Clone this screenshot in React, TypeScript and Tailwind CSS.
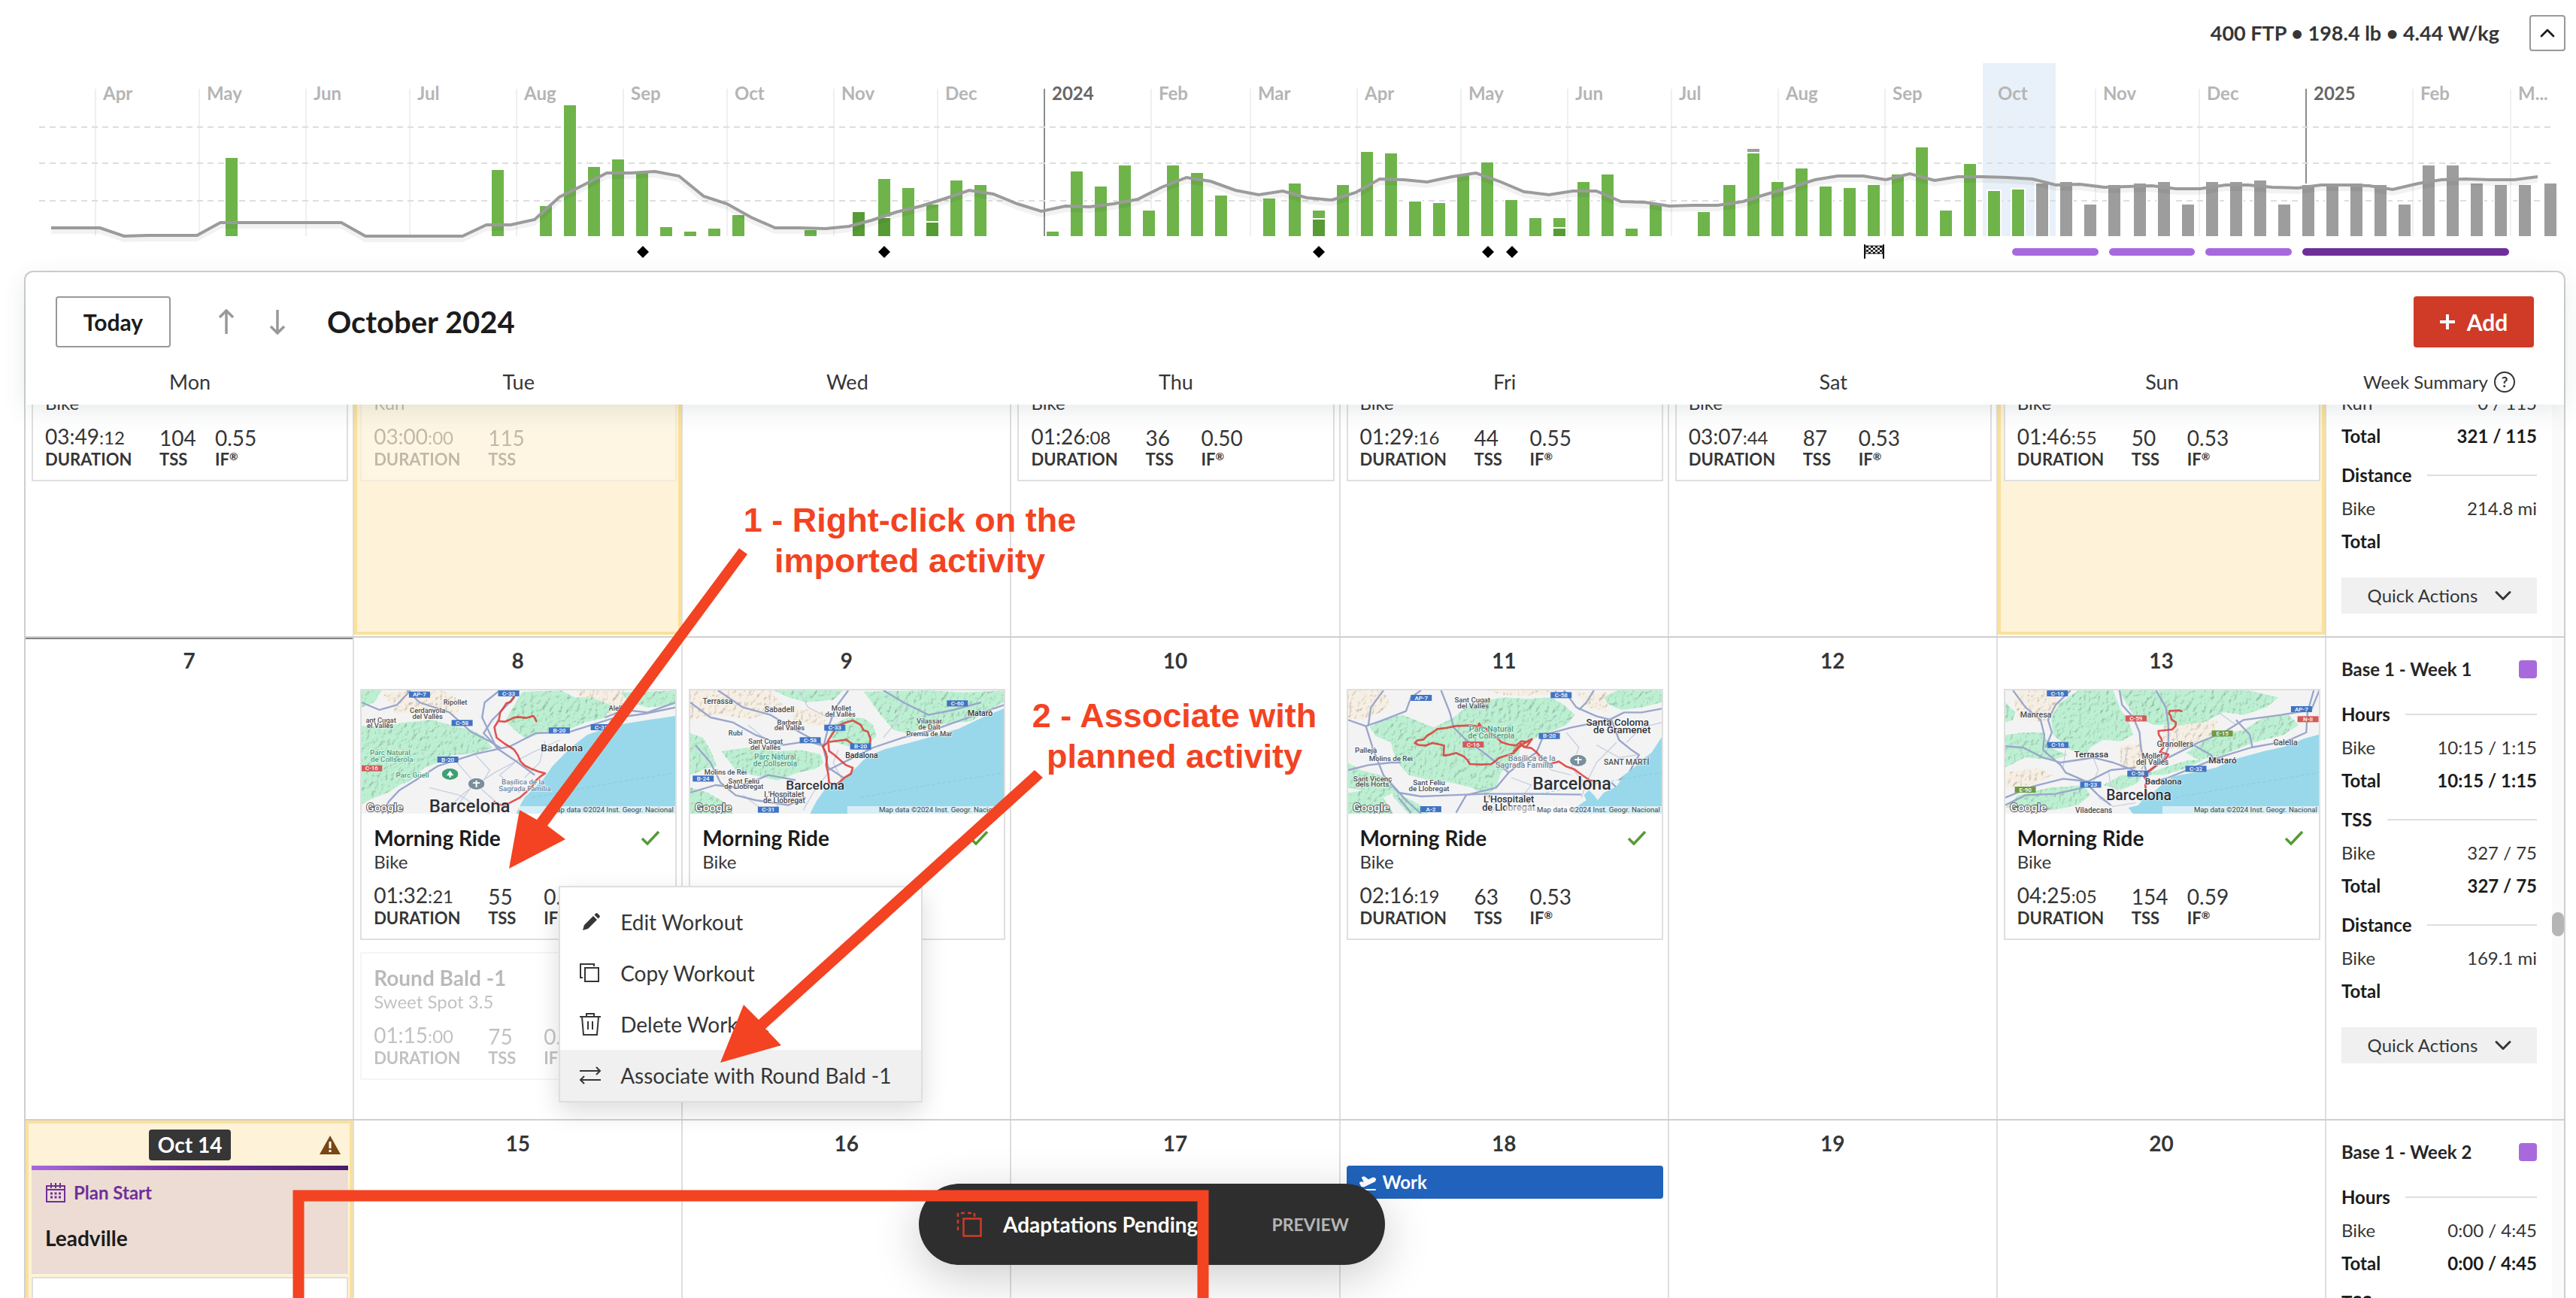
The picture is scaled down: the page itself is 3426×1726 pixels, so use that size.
import type { ReactNode } from "react";
import { ChevronDown, ChevronUp, PlaneTakeoff } from "lucide-react";

type Point = [number, number];

/* ---------- season chart ---------- */

const CHART_BASE = 314;

const months: { label: string; x: number; year?: boolean }[] = [
  { label: "Apr", x: 127 },
  { label: "May", x: 265 },
  { label: "Jun", x: 407 },
  { label: "Jul", x: 545 },
  { label: "Aug", x: 687 },
  { label: "Sep", x: 829 },
  { label: "Oct", x: 967 },
  { label: "Nov", x: 1109 },
  { label: "Dec", x: 1247 },
  { label: "2024", x: 1389, year: true },
  { label: "Feb", x: 1531 },
  { label: "Mar", x: 1663 },
  { label: "Apr", x: 1805 },
  { label: "May", x: 1943 },
  { label: "Jun", x: 2085 },
  { label: "Jul", x: 2223 },
  { label: "Aug", x: 2365 },
  { label: "Sep", x: 2507 },
  { label: "Oct", x: 2647 },
  { label: "Nov", x: 2787 },
  { label: "Dec", x: 2925 },
  { label: "2025", x: 3067, year: true },
  { label: "Feb", x: 3209 },
  { label: "M...", x: 3339 },
];

// [left, top]
const completed: Point[] = [
  [300, 210], [654, 226], [718, 274], [750, 140], [782, 222], [814, 212],
  [846, 230], [878, 302], [910, 308], [942, 304], [974, 286], [1070, 306],
  [1168, 238], [1200, 250], [1232, 272], [1264, 240], [1296, 246],
  [1392, 308], [1424, 228], [1456, 248], [1488, 220], [1520, 280],
  [1552, 220], [1584, 230], [1616, 260], [1680, 264], [1714, 244],
  [1746, 280], [1778, 246], [1810, 202], [1842, 204], [1874, 268],
  [1906, 270], [1938, 232], [1970, 216], [2002, 266], [2034, 290],
  [2066, 290], [2098, 242], [2130, 232], [2162, 304], [2194, 272],
  [2258, 282], [2292, 246], [2324, 204], [2356, 242], [2388, 224],
  [2420, 248], [2452, 250], [2484, 246], [2516, 232], [2548, 196],
  [2580, 280], [2612, 218], [2644, 254], [2676, 252],
];

const outdoor: Point[] = [
  [1134, 282], [1168, 290], [1232, 296], [1746, 292], [2066, 304],
];

const planned: Point[] = [
  [2708, 244], [2740, 242], [2772, 272], [2804, 246], [2838, 244],
  [2870, 242], [2902, 272], [2934, 242], [2966, 242], [2998, 240],
  [3030, 272], [3062, 246], [3094, 246], [3126, 244], [3158, 246],
  [3190, 272], [3222, 220], [3254, 220], [3286, 244], [3318, 246],
  [3350, 246], [3384, 244],
];

const trend =
  "68,303 133,303 165,314 197,313 262,313 293,296 357,296 393,296 454,296 486,314 615,314 647,299 679,299 711,292 744,262 776,246 807,230 839,230 871,228 903,234 936,261 967,271 999,289 1031,303 1063,303 1098,304 1129,301 1159,293 1192,282 1225,274 1257,264 1289,253 1321,258 1353,271 1385,281 1417,274 1449,275 1481,271 1513,265 1545,249 1578,236 1610,241 1643,253 1674,259 1706,254 1738,263 1771,266 1803,256 1835,238 1867,239 1898,242 1931,235 1963,230 1994,241 2027,255 2060,259 2092,254 2123,254 2156,268 2188,269 2220,274 2252,273 2284,273 2318,268 2350,258 2382,249 2414,239 2444,234 2478,234 2508,239 2540,231 2573,240 2604,235 2637,235 2670,236 2703,238 2734,246 2766,245 2799,249 2830,248 2862,247 2894,251 2926,251 2960,246 2990,246 3022,249 3056,250 3087,246 3122,246 3151,247 3182,252 3216,244 3247,239 3279,238 3311,239 3344,239 3375,235";

const phases = [
  { x: 2676, width: 115, color: "#a869dd" },
  { x: 2805, width: 114, color: "#a869dd" },
  { x: 2933, width: 115, color: "#a869dd" },
  { x: 3062, width: 275, color: "#6f2f9a" },
];

const Bars = ({ data, color }: { data: Point[]; color: string }) => (
  <>
    {data.map(([x, y]) => (
      <g key={x}>
        <rect x={x - 2} y={y - 2} width={20} height={CHART_BASE - y + 2} fill="#fff" />
        <rect x={x} y={y} width={16} height={CHART_BASE - y} fill={color} />
      </g>
    ))}
  </>
);

const SeasonChart = () => (
  <svg viewBox="0 68 3426 292" className="block w-full shrink-0" role="img" aria-label="Season training load">
    <rect x={2637} y={84} width={97} height={230} fill="#e8f1f9" />
    {months.map(({ label, x, year }) => (
      <g key={x}>
        <line x1={x} x2={x} y1={118} y2={CHART_BASE} stroke={year ? "#8c8c8c" : "#efefef"} strokeWidth={2} />
        <text x={x + 10} y={133} fontSize={24} fontWeight={700} fill={year ? "#666" : "#b5b5b5"}>
          {label}
        </text>
      </g>
    ))}
    {[169, 217, 267].map((y) => (
      <line key={y} x1={52} x2={3392} y1={y} y2={y} stroke="#dedede" strokeWidth={2} strokeDasharray="8 6" />
    ))}
    <Bars data={completed} color="#6eb44b" />
    <Bars data={outdoor} color="#579b35" />
    <Bars data={planned} color="#9d9d9d" />
    <rect x={2324} y={198} width={16} height={4} fill="#9d9d9d" />
    <polyline points={trend} fill="none" stroke="#000" strokeOpacity={0.05} strokeWidth={6} transform="translate(0 5)" />
    <polyline points={trend} fill="none" stroke="#9b9b9b" strokeWidth={4} />
    {[855, 1176, 1754, 1979, 2011].map((x) => (
      <path key={x} d={`M${x} 327l8 8-8 8-8-8z`} />
    ))}
    {/* checkered race flag */}
    <g fill="#111">
      <path d="M2479 325h2v19h-2zM2504 325h2v19h-2z" />
      <path d="M2481 327h23v10h-23z" fill="none" stroke="#111" />
      {[0, 1, 2, 3].map((r) =>
        [0, 1, 2, 3].map((c) => (
          <rect key={`${r}-${c}`} x={2482 + c * 6 + (r % 2) * 3} y={327 + r * 2.6} width={3} height={2.6} />
        ))
      )}
    </g>
    {phases.map(({ x, width, color }) => (
      <rect key={x} x={x} y={330} width={width} height={10} rx={5} fill={color} />
    ))}
  </svg>
);

/* ---------- route maps ---------- */

type LabelKind = "town" | "city" | "park" | "poi" | "blue" | "red" | "green";
type MapLabel = [string, number, number, LabelKind, number?];

interface MapData {
  id: string;
  sea: string;
  forests: string[];
  bare: string[];
  roads: string[];
  streets: string[];
  routes: string[];
  labels: MapLabel[];
  pins?: { x: number; y: number; kind: "tree" | "church" }[];
}

const badgeColor = { blue: "#3f74c4", red: "#d45a5a", green: "#6d9b3f" };
const textColor = { town: "#4a4d52", city: "#2f3136", park: "#4a9b78", poi: "#71879b" };

const badalona: MapData = {
  id: "badalona",
  sea: "M1262 114L1100 138 1013 153 910 189 841 242 772 313 729 373 660 438 634 485 625 506H1262z",
  forests: [
    "M9 153L90 160 169 141 290 129 376 153 450 170 496 195 531 242 470 262 427 266 370 270 315 301 260 320 204 373 160 390 117 420 60 440 9 467z",
    "M651 17L806 12 860 40 930 40 1013 76 978 123 900 140 806 183 740 175 668 206 630 180 582 135 600 100z",
    "M1040 20L1262 12V70L1150 80 1080 60z",
    "M9 12H90L60 60 9 80z",
  ],
  bare: ["M90 20L330 12 420 60 380 110 250 90 150 110z", "M860 12H1060L1100 90 1000 110 900 60z"],
  roads: [
    "M190 12L240 60 360 100 445 177 520 215 565 242",
    "M90 504L117 456 160 410 221 373 315 313 462 266 600 236 703 183 841 177 1013 123 1140 105 1262 80",
    "M560 12L500 60 490 120 514 170 548 242 634 301 700 350",
    "M634 12L600 60 530 130 496 183 560 250",
    "M9 60L80 90 150 70 204 12",
    "M1262 60L1150 100 1060 90 980 120",
  ],
  streets: [
    "M330 504L420 420 540 340 690 260 800 210",
    "M460 266L520 330 480 400 560 470",
    "M620 300L560 350 640 420",
    "M390 300L460 380 400 460",
    "M740 215L720 300 660 360",
    "M280 400L400 430 520 504",
  ],
  routes: [
    "M617 40L603 58 586 64 575 82 562 100 557 129 539 159 543 180 548 201 580 225 617 248 632 270 643 295 660 312 686 325 715 336 741 343 722 356 703 373 690 395 677 408 640 440 600 461 575 470 548 467 539 456",
    "M557 135L580 137 600 129 615 121 634 118 665 122 694 114 700 122 706 135",
  ],
  labels: [
    ["AP-7", 240, 29, "blue"], ["C-33", 596, 24, "blue"], ["C-58", 410, 142, "blue"],
    ["B-20", 798, 172, "blue"], ["C-31", 965, 159, "blue"], ["B-20", 353, 288, "blue"], ["C-16", 49, 323, "red"],
    ["Ripollet", 383, 58, "town"], ["Cerdanyola", 272, 91, "town"], ["del Vallès", 272, 115, "town"],
    ["ant Cugat", 86, 131, "town"], ["el Vallès", 83, 153, "town"], ["Alella", 1030, 82, "town"],
    ["Badalona", 808, 242, "city", 40], ["Parc Natural", 123, 261, "park", 29],
    ["de Collserola", 130, 287, "park", 29], ["Parc Güell", 212, 349, "park", 29],
    ["Basílica de la", 653, 377, "poi", 29], ["Sagrada Família", 660, 404, "poi", 29],
    ["Barcelona", 440, 474, "city", 72],
  ],
  pins: [{ x: 362, y: 346, kind: "tree" }, { x: 467, y: 385, kind: "church" }],
};

const coast: MapData = {
  id: "coast",
  sea: "M1262 84L1180 118 1080 165 980 195 873 224 790 245 736 266 700 290 667 325 615 372 570 395 546 408 530 430 512 455 486 506H1262z",
  forests: [
    "M133 254L240 240 357 254 450 250 529 266 540 300 512 325 440 340 357 372 260 350 190 330z",
    "M581 147L640 120 701 123 740 150 753 195 701 242 640 235 581 218 565 190z",
    "M701 17L960 12 1100 20 1262 12V60L1200 90 1132 135 1000 150 873 183 820 170 770 112z",
    "M9 183L60 200 90 250 116 313 60 330 9 350z",
    "M340 12H620L580 50 470 60 400 40z",
    "M9 400L80 420 150 460 180 504H9z",
  ],
  bare: ["M9 12H330L380 70 260 130 120 110 9 130z", "M420 80L560 100 540 160 420 130z"],
  roads: [
    "M9 60L90 120 180 140 270 190 380 230 480 215 545 235",
    "M120 12L220 80 330 110 430 170 540 230",
    "M30 230L90 300 130 380 190 430 270 450 400 470 470 440",
    "M1262 70L1120 120 980 170 860 200 740 240 640 290 560 330",
    "M640 12L590 80 560 160 540 240 560 320 620 360",
    "M780 12L860 60 960 110 1060 90 1170 60",
    "M9 420L110 390 200 400 320 350 430 370",
  ],
  streets: [
    "M240 150L300 200 260 260",
    "M560 340L500 420 460 490",
    "M600 250L580 300 620 380",
    "M860 60L830 140 780 200",
    "M440 12L480 80 560 120 640 110",
    "M220 430L300 490M380 430L340 504",
  ],
  routes: [
    "M658 132L630 140 598 153 580 180 563 206 555 222 538 236 548 255 555 278 552 310 560 345 563 378 575 386 598 384 625 360 650 345 658 321 630 310 606 289 585 270 563 254 560 218 600 213 632 209 650 222 684 242 705 234 727 224 728 205 718 177 700 170 690 150z",
  ],
  labels: [
    ["C-60", 1075, 64, "blue"], ["C-33", 586, 161, "blue"], ["C-58", 488, 211, "blue"],
    ["B-20", 689, 236, "blue"], ["B-24", 61, 364, "blue"], ["C-31", 321, 488, "blue"],
    ["Terrassa", 119, 56, "town", 31], ["Sabadell", 365, 88, "town", 31], ["Mollet", 612, 84, "town"],
    ["del Vallès", 608, 107, "town"], ["Mataró", 1166, 102, "city", 31], ["Barberà", 405, 139, "town"],
    ["del Vallès", 405, 161, "town"], ["Vilassar", 963, 134, "town"], ["de Dalt", 963, 157, "town"],
    ["Rubí", 190, 182, "town"], ["Premià de Mar", 963, 186, "town"], ["Sant Cugat", 310, 216, "town"],
    ["del Vallès", 310, 238, "town"], ["Parc Natural", 348, 276, "park", 30],
    ["de Collserola", 348, 304, "park", 30], ["Badalona", 693, 272, "city", 31],
    ["Molins de Rei", 150, 338, "town"], ["Sant Feliu", 223, 375, "town"], ["de Llobregat", 223, 396, "town"],
    ["Barcelona", 508, 389, "city", 52], ["L'Hospitalet", 384, 426, "town", 30],
    ["de Llobregat", 384, 450, "town", 30],
  ],
};

const collserola: MapData = {
  id: "collserola",
  sea: "M1262 195L1220 260 1180 290 1150 320 1110 350 1080 395 1030 420 1005 450 990 430 970 410 950 430 960 450 930 470 900 506H1262z",
  forests: [
    "M95 160L150 125 230 110 290 135 350 160 430 120 490 70 560 50 640 40 720 45 820 40 870 70 915 110 880 150 800 185 740 210 700 230 690 270 620 340 600 400 560 430 500 400 420 380 330 370 250 350 215 310 190 260 180 220 120 195z",
    "M9 300L60 330 170 360 190 420 150 440 100 420 9 400z",
    "M9 420L80 410 150 440 190 504H9z",
    "M1030 40L1080 12H1262V60L1180 80 1100 90 1050 70z",
    "M180 390L220 430 300 470 330 504H250L190 440z",
  ],
  bare: ["M9 12H150L180 70 120 110 60 130 9 120z", "M560 12H860L820 30 640 34z", "M920 20H1050L1040 100 960 80z"],
  roads: [
    "M9 130L80 155 150 130 240 95 260 40 300 12",
    "M80 155L110 250 150 350 210 420 300 435 420 430 560 425 740 425 940 428",
    "M150 12L100 80 90 150",
    "M380 12L415 100 430 160 480 210 550 260 600 300 650 340",
    "M870 12L920 80 1000 115 1060 130 1090 210 1140 250 1170 270 1130 340 1090 370",
    "M1262 85L1180 100 1110 100 1050 130 900 160 790 190 760 260 700 300 650 340 600 400 480 430 440 500",
    "M9 330L90 310 180 300 220 300",
    "M1262 500L1100 420 1060 380",
    "M210 440L260 500M160 360L240 450 300 504",
    "M990 12L960 60 930 90",
  ],
  streets: [
    "M880 180L930 240 900 320 960 390",
    "M1080 220L1000 300 960 380 940 440",
    "M760 270L820 330 900 350",
    "M660 360L740 390 700 440 780 504",
    "M560 430L600 470 580 504",
    "M1120 220L1180 160 1262 140",
    "M1000 230L1090 280 1160 270",
  ],
  routes: [
    "M276 222L285 212 310 208 325 192 350 178 365 166 400 162 440 154 500 152 530 156 532 144 540 158 560 165 575 182 600 198 620 218 650 228 680 232 700 215 720 218 742 206",
    "M276 222L290 230 320 232 345 222 375 228 392 232 390 272 410 270 440 262 470 275 485 290 495 306 540 308 580 306 600 292 610 282 640 272 670 262 690 240 710 225 742 208 720 238 700 232",
    "M670 255L690 235M680 250L700 225M710 238L740 242 760 258 780 280 810 306 850 296 880 316 910 326 940 348 975 372 990 372",
  ],
  labels: [
    ["AP-7", 301, 42, "blue"], ["C-58", 859, 31, "blue"], ["B-20", 812, 194, "blue"],
    ["C-16", 508, 228, "red"], ["A-2", 339, 486, "blue"],
    ["Sant Cugat", 505, 51, "town", 29], ["del Vallès", 508, 74, "town", 29],
    ["Santa Coloma", 1084, 140, "city", 40], ["de Gramenet", 1102, 170, "city", 40],
    ["Parc Natural", 580, 166, "park", 32], ["de Collserola", 580, 193, "park", 32],
    ["Pallejà", 80, 252, "town", 29], ["Molins de Rei", 180, 284, "town", 29],
    ["Basílica de la", 742, 283, "poi", 32], ["Sagrada Família", 712, 310, "poi", 32],
    ["SANT MARTÍ", 1120, 297, "town", 31], ["Sant Vicenç", 107, 364, "town", 29],
    ["dels Horts", 106, 386, "town", 29], ["Sant Feliu", 332, 380, "town", 29],
    ["de Llobregat", 332, 404, "town", 29], ["Barcelona", 902, 382, "city", 70],
    ["L'Hospitalet", 650, 447, "city", 38], ["de Llobregat", 650, 478, "city", 38],
  ],
  pins: [{ x: 927, y: 292, kind: "church" }],
};

const granollers: MapData = {
  id: "granollers",
  sea: "M1262 188L1200 205 1130 235 1040 255 930 285 850 320 760 340 680 355 620 400 590 430 560 445 540 470 500 480 520 506H1262z",
  forests: [
    "M230 60L300 12H440L470 90 500 130 520 190 470 215 400 210 350 240 330 270 270 250 200 190 190 120z",
    "M460 12H980L1100 40 1050 80 960 110 880 100 800 140 720 150 600 150 520 110z",
    "M9 190L80 180 160 180 190 240 260 270 200 290 90 280 9 320z",
    "M730 260L840 190 960 170 1040 120 1140 110 1180 150 1120 190 1000 220 880 270 780 290z",
    "M560 350L640 320 740 290 800 290 740 320 640 350z",
    "M400 390L470 350 560 345 540 380 470 410z",
    "M9 480L60 430 190 400 320 390 350 430 300 470 200 490z",
    "M9 60L50 100 40 130 9 140z",
  ],
  bare: ["M60 12H210L230 70 180 140 70 130 40 60z", "M640 150L860 130 840 190 720 250 640 240z", "M9 340L140 320 200 350 120 390 9 400z", "M460 230L560 220 560 330 470 320z"],
  roads: [
    "M40 12L90 80 150 130 165 190 160 250 230 310 250 340 320 370 380 430 430 470",
    "M270 12L210 70 180 130 195 180 170 240",
    "M9 235L80 240 160 280 230 300 330 285 360 280 440 300 520 330 570 350",
    "M465 12L475 70 520 120 545 180 550 240 570 330",
    "M610 12L650 80 660 150 660 240 640 290 580 340",
    "M1262 12L1230 90 1110 110 960 130 880 180 780 220 660 280",
    "M1240 12L1215 100 1210 180 1130 215 990 240 860 280 760 320 660 360 590 380",
    "M930 130L985 190 995 240",
    "M9 470L90 430 210 425 320 400",
    "M9 440L120 395 240 365 340 375 430 330 530 320",
    "M760 230L830 270 850 300",
  ],
  streets: [
    "M420 330L430 390 460 410",
    "M360 280L380 330 360 380",
    "M530 460L440 475 380 440",
    "M250 250L240 320M500 240L480 320",
    "M690 170L700 240 760 240",
    "M860 100L930 150",
  ],
  routes: [
    "M712 95L705 92 665 94 662 104 670 115 672 128 690 140 688 155 675 168 620 174 622 190 632 205 640 240 626 258 660 268 650 285 620 305 580 335 562 355 572 370 590 378 568 388 572 430",
    "M575 338L570 362",
  ],
  labels: [
    ["C-16", 217, 24, "blue"], ["C-16", 219, 230, "blue"], ["C-59", 531, 124, "red"],
    ["AP-7", 1191, 87, "blue"], ["N-II", 1217, 127, "red"], ["E-15", 875, 184, "green"],
    ["C-32", 770, 325, "blue"], ["C-58", 538, 344, "blue"], ["B-23", 350, 388, "blue"], ["E-90", 89, 408, "green"],
    ["Manresa", 131, 109, "town", 32], ["Terrassa", 352, 267, "city", 35], ["Granollers", 687, 227, "town", 32],
    ["Mollet", 596, 273, "town", 30], ["del Vallès", 596, 298, "town", 30], ["Mataró", 876, 291, "city", 35],
    ["Calella", 1127, 220, "town", 32], ["Badalona", 640, 375, "city", 35],
    ["Barcelona", 542, 431, "city", 58], ["Viladecans", 362, 490, "town", 30],
  ],
};

const RouteMap = ({ map }: { map: MapData }) => (
  <svg
    viewBox="9 12 1252 492"
    preserveAspectRatio="xMidYMid slice"
    className="block h-[164px] w-full font-['Roboto',sans-serif]"
    role="img"
    aria-label="Route map"
  >
    <filter id={`relief-${map.id}`} x="0" y="0" width="1" height="1">
      <feTurbulence type="fractalNoise" baseFrequency="0.055 0.045" numOctaves={3} seed={7} result="noise" />
      <feDiffuseLighting in="noise" surfaceScale={6} diffuseConstant={1.2} lightingColor="#fff" result="light">
        <feDistantLight azimuth={225} elevation={60} />
      </feDiffuseLighting>
      <feComposite in="light" in2="SourceAlpha" operator="in" result="cut" />
      <feBlend in="cut" in2="SourceGraphic" mode="multiply" />
    </filter>
    <rect x={9} y={12} width={1254} height={494} fill="#f3f3f4" />
    <g filter={`url(#relief-${map.id})`}>
      {map.bare.map((d) => <path key={d} d={d} fill="#f7efe3" />)}
      {map.forests.map((d) => <path key={d} d={d} fill="#bdf0d3" />)}
    </g>
    <g fill="none" stroke="#c9cfdf" strokeWidth={4}>
      {map.streets.map((d) => <path key={d} d={d} />)}
    </g>
    <g fill="none" stroke="#9aa6cb" strokeWidth={7} strokeLinejoin="round">
      {map.roads.map((d) => <path key={d} d={d} />)}
    </g>
    <path d={map.sea} fill="#98d8ea" />
    <path d="M690 440L960 390 1262 340" fill="none" stroke="#7cc4da" strokeWidth={2} strokeDasharray="14 8" />
    <g fill="none" stroke="#dc3a35" strokeWidth={8} strokeLinejoin="round" strokeLinecap="round" opacity={0.85}>
      {map.routes.map((d) => <path key={d} d={d} />)}
    </g>
    {map.pins?.map(({ x, y, kind }) => (
      <g key={x} transform={`translate(${x} ${y})`}>
        <ellipse rx={34} ry={24} fill={kind === "tree" ? "#3f9f73" : "#7a8f9b"} stroke="#fff" strokeWidth={3} />
        {kind === "tree"
          ? <path d="M0-14L14 6H-14zM-3 6h6v8h-6z" fill="#fff" />
          : <path d="M-3-14h6v8h11v5H3v14h-6V-1h-11v-5h11z" fill="#fff" />}
      </g>
    ))}
    {map.labels.map(([text, x, y, kind, size = 28]) =>
      kind === "blue" || kind === "red" || kind === "green"
        ? (
          <g key={`${text}${x}${y}`}>
            <rect x={x - 42} y={y - 12} width={84} height={24} fill={badgeColor[kind]} />
            <text x={x} y={y + 8} textAnchor="middle" fontSize={24} fontWeight={500} fill="#fff">{text}</text>
          </g>
        )
        : (
          <text
            key={`${text}${x}${y}`}
            x={x}
            y={y + size * 0.35}
            textAnchor="middle"
            fontSize={size}
            fontWeight={500}
            fill={textColor[kind]}
            stroke="#fff"
            strokeWidth={4}
            strokeOpacity={0.75}
            paintOrder="stroke"
          >
            {text}
          </text>
        )
    )}
    <rect x={636} y={474} width={626} height={32} fill="#fff" opacity={0.6} />
    <text x={1254} y={498} textAnchor="end" fontSize={29} fill="#444">Map data ©2024 Inst. Geogr. Nacional</text>
    <text x={28} y={496} fontSize={46} fontWeight={500} fill="#fff" stroke="#555" strokeWidth={6} paintOrder="stroke">
      Google
    </text>
  </svg>
);

/* ---------- calendar pieces ---------- */

interface Workout {
  title?: string;
  sport: string;
  time: string;
  seconds: string;
  tss: number;
  intensity?: string;
  map?: MapData;
  faded?: boolean;
  done?: boolean;
}

const Stats = ({ time, seconds, tss, intensity }: Workout) => (
  <dl className="mt-3 grid grid-cols-[152px_74px_auto]">
    <div className="flex flex-col-reverse">
      <dt className="text-[22px] leading-[26px] font-bold">DURATION</dt>
      <dd className="text-[28px] leading-8">
        {time}
        <span className="text-2xl">:{seconds}</span>
      </dd>
    </div>
    <div className="flex flex-col-reverse">
      <dt className="text-[22px] leading-[26px] font-bold">TSS</dt>
      <dd className="text-[28px] leading-8">{tss}</dd>
    </div>
    {intensity && (
      <div className="flex flex-col-reverse">
        <dt className="text-[22px] leading-[26px] font-bold">
          IF<sup className="text-sm">®</sup>
        </dt>
        <dd className="text-[28px] leading-8">{intensity}</dd>
      </div>
    )}
  </dl>
);

const WorkoutCard = ({ workout }: { workout: Workout }) => {
  const { title, sport, map, faded, done } = workout;
  return (
    <article
      className={`border-2 border-[#dfdfdf] bg-white text-[#363636] ${faded ? "opacity-30" : ""} ${
        title ? "" : "border-t-0"
      }`}
    >
      {map && <RouteMap map={map} />}
      <div className={`px-4 pb-[14px] ${title ? "pt-4" : "pt-1.5"}`}>
        {title && (
          <div className="flex items-center justify-between">
            <h3 className="text-[28px] leading-8 font-bold text-[#1c1c1c]">{title}</h3>
            {done && (
              <svg viewBox="0 0 26 20" className="mr-1 h-5 w-[26px]" aria-label="Completed">
                <path d="M2 11l7 7L24 2" fill="none" stroke="#559b35" strokeWidth={3.5} />
              </svg>
            )}
          </div>
        )}
        <p className="text-2xl leading-8">{sport}</p>
        <Stats {...workout} />
      </div>
    </article>
  );
};

const DayCell = ({ date, children, className = "" }: { date?: ReactNode; children?: ReactNode; className?: string }) => (
  <div className={`relative min-w-0 border-r-2 border-[#dedede] ${className}`}>
    {date && (
      <div className="flex h-[60px] items-center justify-center text-[28px] font-bold text-[#363636]">{date}</div>
    )}
    {children}
  </div>
);

const Line = ({ label, value = "", bold }: { label: string; value?: string; bold?: boolean }) => (
  <div className={`flex justify-between ${bold ? "font-bold text-[#1c1c1c]" : "text-[#363636]"}`}>
    <dt>{label}</dt>
    <dd>{value}</dd>
  </div>
);

const Heading = ({ children }: { children: ReactNode }) => (
  <h4 className="flex items-center gap-5 font-bold text-[#1c1c1c]">
    {children}
    <span className="h-0.5 grow bg-[#dedede]" />
  </h4>
);

const QuickActions = () => (
  <button type="button" className="mt-[26px] flex h-12 w-full items-center justify-center gap-4 bg-[#f0f0f0] pl-2 text-2xl text-[#363636]">
    Quick Actions
    <ChevronDown size={36} strokeWidth={2} />
  </button>
);

const WeekTitle = ({ children }: { children: ReactNode }) => (
  <div className="mb-4 flex items-center justify-between font-bold text-[#262626]">
    {children}
    <span className="size-6 rounded bg-[#a869dd]" />
  </div>
);

const weekGrid = "grid grid-cols-[repeat(7,minmax(0,1fr))_300px_16px]";
const summary = "px-5 text-2xl leading-[44px]";

const firstWeek: (Workout | null)[] = [
  { sport: "Bike", time: "03:49", seconds: "12", tss: 104, intensity: "0.55" },
  { sport: "Run", time: "03:00", seconds: "00", tss: 115, faded: true },
  null,
  { sport: "Bike", time: "01:26", seconds: "08", tss: 36, intensity: "0.50" },
  { sport: "Bike", time: "01:29", seconds: "16", tss: 44, intensity: "0.55" },
  { sport: "Bike", time: "03:07", seconds: "44", tss: 87, intensity: "0.53" },
  { sport: "Bike", time: "01:46", seconds: "55", tss: 50, intensity: "0.53" },
];

const ride = { title: "Morning Ride", sport: "Bike", done: true };

const secondWeek: { day: number; workouts: Workout[] }[] = [
  { day: 7, workouts: [] },
  {
    day: 8,
    workouts: [
      { ...ride, time: "01:32", seconds: "21", tss: 55, intensity: "0.55", map: badalona },
      { title: "Round Bald -1", sport: "Sweet Spot 3.5", time: "01:15", seconds: "00", tss: 75, intensity: "0.77", faded: true },
    ],
  },
  { day: 9, workouts: [{ ...ride, time: "02:01", seconds: "36", tss: 55, intensity: "0.52", map: coast }] },
  { day: 10, workouts: [] },
  { day: 11, workouts: [{ ...ride, time: "02:16", seconds: "19", tss: 63, intensity: "0.53", map: collserola }] },
  { day: 12, workouts: [] },
  { day: 13, workouts: [{ ...ride, time: "04:25", seconds: "05", tss: 154, intensity: "0.59", map: granollers }] },
];

const menuItems: { label: string; active?: boolean; icon: ReactNode }[] = [
  {
    label: "Edit Workout",
    icon: <path d="M6 27l2-7L20 8l5 5L13 25zM21.500 6.500l2-2q1-1 2 0l3 3q1 1 0 2l-2 2z" fill="currentColor" />,
  },
  {
    label: "Copy Workout",
    icon: <path d="M9 9h18v18H9zM6 22H3V4h18v3" fill="none" stroke="currentColor" strokeWidth={2} />,
  },
  {
    label: "Delete Workout",
    icon: <path d="M2 6h28M11 6V2h10v4M5 6l2 24h18l2-24M13 12v11M19 12v11" fill="none" stroke="currentColor" strokeWidth={2} />,
  },
  {
    label: "Associate with Round Bald -1",
    active: true,
    icon: <path d="M2 10h27M24 5l5 5-5 5M30 22H3M8 17l-5 5 5 5" fill="none" stroke="currentColor" strokeWidth={2} />,
  },
];

const ContextMenu = () => (
  <div
    role="menu"
    className="absolute top-[330px] left-[272px] z-20 w-[484px] border-2 border-[#dedede] bg-white pt-3 shadow-[0_12px_32px_rgba(0,0,0,0.14)]"
  >
    {menuItems.map(({ label, active, icon }) => (
      <button
        key={label}
        type="button"
        role="menuitem"
        className={`flex h-[68px] w-full items-center gap-6 pl-6 text-[28px] whitespace-nowrap text-[#363636] ${
          active ? "bg-[#f0f0f0]" : ""
        }`}
      >
        <svg viewBox="0 0 32 32" className="size-8 shrink-0">{icon}</svg>
        {label}
      </button>
    ))}
  </div>
);

const MonthHeader = () => (
  <header className="relative z-30 rounded-t-xl bg-white pt-8 shadow-[0_8px_32px_rgba(60,80,90,0.12)]">
    <div className="flex items-center pr-10 pl-10">
      <button type="button" className="h-[68px] w-[153px] rounded border-2 border-[#999] text-[30px] font-bold text-[#1c1c1c]">
        Today
      </button>
      <button type="button" aria-label="Previous month" className="ml-16">
        <svg viewBox="0 0 20 34" className="h-[34px] w-5 text-[#999]">
          <path d="M10 33V2M1 11l9-9 9 9" fill="none" stroke="currentColor" strokeWidth={3.5} />
        </svg>
      </button>
      <button type="button" aria-label="Next month" className="ml-12">
        <svg viewBox="0 0 20 34" className="h-[34px] w-5 text-[#999]">
          <path d="M10 1v31M1 23l9 9 9-9" fill="none" stroke="currentColor" strokeWidth={3.5} />
        </svg>
      </button>
      <h1 className="ml-14 text-[40px] leading-[60px] font-bold text-[#1c1c1c]">October 2024</h1>
      <button
        type="button"
        className="ml-auto flex h-[68px] w-40 items-center justify-center gap-4 rounded bg-[#cf3b27] text-[30px] font-bold text-white"
      >
        <svg viewBox="0 0 20 20" className="size-5">
          <path d="M10 0v20M0 10h20" stroke="currentColor" strokeWidth={4} />
        </svg>
        Add
      </button>
    </div>
    <div className={`${weekGrid} mt-7 pb-3 text-center text-[27px] leading-9 text-[#363636]`}>
      {["Mon", "Tue", "Wed", "Thu", "Fri", "Sat", "Sun"].map((d) => <div key={d}>{d}</div>)}
      <div className="flex items-center justify-center gap-2 text-2xl">
        Week Summary
        <svg viewBox="0 0 28 28" className="size-7">
          <circle cx={14} cy={14} r={13} fill="none" stroke="#363636" strokeWidth={2} />
          <text x={14} y={21} textAnchor="middle" fontSize={19} fontWeight={700} fill="#363636">?</text>
        </svg>
      </div>
    </div>
  </header>
);

const Annotations = () => (
  <>
    <div className="pointer-events-none absolute top-[665px] left-[970px] z-50 w-[480px] text-center font-['Liberation_Sans',sans-serif] text-[45px] leading-[54px] font-bold text-[#f34322]">
      1 - Right-click on the imported activity
    </div>
    <div className="pointer-events-none absolute top-[925px] left-[1352px] z-50 w-[420px] text-center font-['Liberation_Sans',sans-serif] text-[45px] leading-[54px] font-bold text-[#f34322]">
      2 - Associate with planned activity
    </div>
    <svg
      viewBox="0 0 3426 1726"
      preserveAspectRatio="xMinYMin meet"
      className="pointer-events-none absolute inset-x-0 top-0 z-50 w-full"
      fill="#f34322"
    >
      <path d="M983 729L714 1090 691 1077 677 1155 752 1116 728 1098 994 737z" />
      <path d="M1376 1024L1009 1356 989 1336 958 1413 1039 1390 1018 1368 1387 1034z" />
      <path d="M397 1740V1590H1600V1740" fill="none" stroke="#f34322" strokeWidth={15} />
    </svg>
  </>
);

export default function App() {
  return (
    <div className="relative flex h-screen flex-col overflow-hidden bg-white font-['Lato',sans-serif] text-[#363636]">
      <div className="flex shrink-0 items-center justify-end gap-10 pt-5 pr-[14px]">
        <p className="text-[27px] leading-[48px] font-bold">400 FTP • 198.4 lb • 4.44 W/kg</p>
        <button
          type="button"
          aria-label="Collapse chart"
          className="flex size-12 items-center justify-center rounded border-2 border-[#999] text-[#1c1c1c]"
        >
          <ChevronUp size={32} strokeWidth={2} />
        </button>
      </div>
      <SeasonChart />

      <main className="mr-[14px] ml-8 flex min-h-0 grow flex-col rounded-t-xl border-2 border-b-0 border-[#cfcfcf]">
        <MonthHeader />
        <div className="relative min-h-0 grow">
          {/* thumb of the calendar scroller */}
          <span className="absolute top-[675px] right-0 z-10 h-8 w-4 rounded-full bg-[#b5b5b5]" />

          <div className={`${weekGrid} -mt-6 h-[334px] border-b-2 border-[#cfcfcf]`}>
            {firstWeek.map((workout, i) => {
              const event = i === 1 || i === 6;
              return (
                <DayCell key={i} className={i === 0 ? "border-[#8f8a78]" : ""}>
                  <div className={event ? "h-[330px] border-4 border-t-0 border-[#fae09a] bg-[#fef3d8] pr-0.5 pl-1" : "pr-1.5 pl-2"}>
                    {workout && <WorkoutCard workout={workout} />}
                  </div>
                </DayCell>
              );
            })}
            <div className={summary}>
              <dl>
                <Line label="Run" value="0 / 115" />
                <Line label="Total" value="321 / 115" bold />
              </dl>
              <div className="mt-2">
                <Heading>Distance</Heading>
                <dl>
                  <Line label="Bike" value="214.8 mi" />
                  <Line label="Total" bold />
                </dl>
              </div>
              <QuickActions />
            </div>
            <div className="bg-[#fafafa]" />
          </div>

          <div className={`${weekGrid} h-[642px] border-b-2 border-[#cfcfcf]`}>
            {secondWeek.map(({ day, workouts }) => (
              <DayCell
                key={day}
                date={day}
                className={day === 7 ? "shadow-[inset_0_2px_0_#858585]" : ""}
              >
                <div className="flex flex-col gap-4 pt-2 pr-1.5 pl-2">
                  {workouts.map((workout) => <WorkoutCard key={workout.title} workout={workout} />)}
                </div>
                {day === 8 && <ContextMenu />}
              </DayCell>
            ))}
            <div className={`${summary} pt-5`}>
              <WeekTitle>Base 1 - Week 1</WeekTitle>
              <Heading>Hours</Heading>
              <dl>
                <Line label="Bike" value="10:15 / 1:15" />
                <Line label="Total" value="10:15 / 1:15" bold />
              </dl>
              <div className="mt-2">
                <Heading>TSS</Heading>
                <dl>
                  <Line label="Bike" value="327 / 75" />
                  <Line label="Total" value="327 / 75" bold />
                </dl>
              </div>
              <div className="mt-2">
                <Heading>Distance</Heading>
                <dl>
                  <Line label="Bike" value="169.1 mi" />
                  <Line label="Total" bold />
                </dl>
              </div>
              <QuickActions />
            </div>
            <div className="bg-[#fafafa]" />
          </div>

          <div className={`${weekGrid} h-[642px]`}>
            <DayCell>
              <div className="h-full border-4 border-[#fae09a] bg-[#fef3d8] pr-0.5 pl-1">
                <div className="relative flex h-14 items-center justify-center">
                  <span className="rounded bg-[#363636] px-3 text-[28px] leading-[41px] font-bold text-white">Oct 14</span>
                  <svg viewBox="0 0 28 25" className="absolute right-2.5 h-[25px] w-7" aria-label="Warning">
                    <path d="M14 0l14 25H0z" fill="#7a4614" />
                    <path d="M12.500 8h3v9h-3zM12.500 19h3v3h-3z" fill="#fff" />
                  </svg>
                </div>
                <article className="h-36 border-b-2 border-[#dedede] bg-[#eddcd3] px-[18px]">
                  <div className="-mx-[18px] h-1.5 bg-linear-to-r from-[#a869dd] via-[#6f2f9a] to-[#4b1a6b]" />
                  <p className="mt-3.5 flex items-center gap-2.5 text-2xl leading-8 font-bold text-[#6f2f9a]">
                    <svg viewBox="0 0 28 28" className="size-7" fill="none" stroke="currentColor" strokeWidth={2}>
                      <path d="M2 5h24v21H2zM2 10h24M8 1v7M14 1v7M20 1v7" />
                      <path d="M7 15h14M7 20h14" strokeWidth={3} strokeDasharray="3 2.500" />
                    </svg>
                    Plan Start
                  </p>
                  <h3 className="mt-7 text-[28px] leading-8 font-bold text-[#1c1c1c]">Leadville</h3>
                </article>
                <div className="mt-1 h-80 border-2 border-[#dfdfdf] bg-white" />
              </div>
            </DayCell>
            {[15, 16, 17, 18, 19, 20].map((day) => (
              <DayCell key={day} date={day}>
                {day === 18 && (
                  <div className="mr-1.5 ml-2 flex h-11 items-center gap-2 rounded bg-[#2163bc] px-4 text-2xl font-bold text-white">
                    <PlaneTakeoff size={24} fill="currentColor" />
                    Work
                  </div>
                )}
              </DayCell>
            ))}
            <div className={`${summary} pt-5`}>
              <WeekTitle>Base 1 - Week 2</WeekTitle>
              <Heading>Hours</Heading>
              <dl>
                <Line label="Bike" value="0:00 / 4:45" />
                <Line label="Total" value="0:00 / 4:45" bold />
              </dl>
              <div className="mt-2">
                <Heading>TSS</Heading>
              </div>
            </div>
            <div className="bg-[#fafafa]" />
          </div>
        </div>
      </main>

      <div className="absolute bottom-11 left-[1222px] z-40 flex h-[108px] w-[620px] items-center rounded-full bg-[#2e2e2e] pr-12 pl-[50px] shadow-[0_16px_64px_rgba(0,0,0,0.2)]">
        <svg viewBox="0 0 34 34" className="size-[34px]" fill="none" stroke="#cf3b27" strokeWidth={2.5}>
          <path d="M9.500 9.500h23v23h-23z" />
          <path d="M2 25V2h22v6" strokeDasharray="5 4" />
        </svg>
        <span className="ml-7 text-[28px] font-bold text-white">Adaptations Pending</span>
        <button type="button" className="ml-auto text-[23px] font-bold text-[#b5b5b5]">PREVIEW</button>
      </div>

      <Annotations />
    </div>
  );
}
